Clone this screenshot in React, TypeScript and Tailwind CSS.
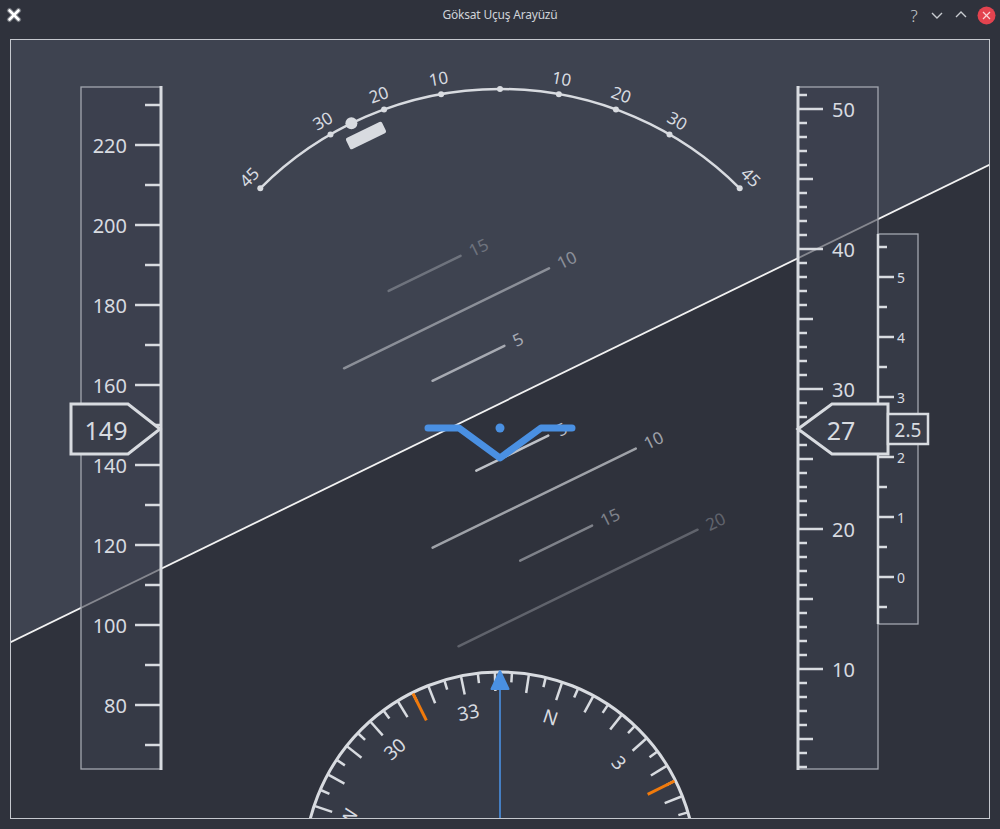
import React from "react";

const FG = "#d8dbe0";
const BLUE = "#4a90e2";
const CX = 500;
const CY = 428;
const FONT = "'Noto Sans', 'Open Sans', sans-serif";

function polar(cx: number, cy: number, r: number, deg: number): [number, number] {
  const a = (deg * Math.PI) / 180;
  return [cx + r * Math.sin(a), cy - r * Math.cos(a)];
}

const HORIZON_Y = 406;
const ROLL = -26;

const pitchLines = [
  { p: 15, len: 80 },
  { p: 10, len: 228 },
  { p: 5, len: 80 },
  { p: -5, len: 80 },
  { p: -10, len: 226 },
  { p: -15, len: 80 },
  { p: -20, len: 266 },
];

function Attitude() {
  return (
    <g transform={`rotate(${ROLL} ${CX} ${CY})`}>
      <rect x={-1500} y={-2000} width={4000} height={2000 + HORIZON_Y} fill="#3e4350" />
      <rect x={-1500} y={HORIZON_Y} width={4000} height={3000} fill="#2f323c" />
      {pitchLines.map(({ p, len }) => {
        const y = HORIZON_Y - 10 * p;
        const op = Math.max(0.15, 0.95 - Math.abs(y - CY) * 0.0037);
        const x2 = CX + len / 2;
        return (
          <g key={p} opacity={op}>
            <line x1={CX - len / 2} y1={y} x2={x2} y2={y} stroke={FG} strokeWidth={2.5} strokeLinecap="round" />
            <text
              x={x2 + 10}
              y={y}
              fill={FG}
              fontSize={17}
              fontFamily={FONT}
              dominantBaseline="central"
            >
              {Math.abs(p)}
            </text>
          </g>
        );
      })}
      <line x1={-1500} y1={HORIZON_Y} x2={2500} y2={HORIZON_Y} stroke="#f2f2f2" strokeWidth={1.8} />
    </g>
  );
}

function RollArc() {
  const R = 339;
  const [sx, sy] = polar(CX, CY, R, -45);
  const [ex, ey] = polar(CX, CY, R, 45);
  const marks = [-45, -30, -20, -10, 0, 10, 20, 30, 45];
  const [px, py] = polar(CX, CY, R, -26);
  return (
    <g>
      <path d={`M ${sx} ${sy} A ${R} ${R} 0 0 1 ${ex} ${ey}`} fill="none" stroke={FG} strokeWidth={2.5} />
      {marks.map((m) => {
        const [x, y] = polar(CX, CY, R, m);
        const [lx, ly] = polar(CX, CY, R + 16, m);
        return (
          <g key={m}>
            <circle cx={x} cy={y} r={3} fill={FG} />
            {m !== 0 && (
              <text
                x={lx}
                y={ly}
                fill={FG}
                fontSize={17}
                fontFamily={FONT}
                textAnchor="middle"
                dominantBaseline="central"
                transform={`rotate(${m} ${lx} ${ly})`}
              >
                {Math.abs(m)}
              </text>
            )}
          </g>
        );
      })}
      <circle cx={px} cy={py} r={6} fill={FG} />
      <rect x={-20} y={-6.3} width={40} height={12.6} rx={2} fill={FG} transform="translate(366 135.5) rotate(-26)" />
    </g>
  );
}

function SpeedTape() {
  const ticks: number[] = [];
  for (let v = 70; v <= 230; v += 10) ticks.push(v);
  const yOf = (v: number) => 429 - (v - 149) * 4;
  return (
    <g>
      <rect x={81} y={87} width={80} height={682} fill="#3c404c" fillOpacity={0.6} stroke="#a3a7b0" strokeWidth={1.3} />
      <line x1={161} y1={86} x2={161} y2={770} stroke={FG} strokeWidth={3} />
      {ticks.map((v) => {
        const y = yOf(v);
        const major = v % 20 === 0;
        return (
          <g key={v}>
            <line x1={major ? 135 : 145} y1={y} x2={161} y2={y} stroke={FG} strokeWidth={2.5} />
            {major && (
              <text x={127} y={y} fill={FG} fontSize={20} fontFamily={FONT} textAnchor="end" dominantBaseline="central">
                {v}
              </text>
            )}
          </g>
        );
      })}
      <polygon points="71,404 128,404 160,429 128,454 71,454" fill="#3a3e4a" stroke={FG} strokeWidth={3} strokeLinejoin="miter" />
      <text x={106} y={430} fill={FG} fontSize={25} fontFamily={FONT} textAnchor="middle" dominantBaseline="central">
        149
      </text>
    </g>
  );
}

function AltTape() {
  const ticks: number[] = [];
  for (let a = 3; a <= 51; a++) ticks.push(a);
  const yOf = (a: number) => 249 + (40 - a) * 14;
  const vs: number[] = [];
  for (let v = -0.5; v <= 5.5; v += 0.5) vs.push(v);
  const vyOf = (v: number) => 577 - v * 60;
  return (
    <g>
      <rect x={798} y={87} width={80} height={682} fill="#3c404c" fillOpacity={0.6} stroke="#a3a7b0" strokeWidth={1.3} />
      <rect x={878} y={234} width={40} height={390} fill="#3c404c" fillOpacity={0.6} stroke="#a3a7b0" strokeWidth={1.3} />
      <line x1={798} y1={86} x2={798} y2={770} stroke={FG} strokeWidth={3} />
      <line x1={878} y1={234} x2={878} y2={624} stroke={FG} strokeWidth={2.5} />
      {ticks.map((a) => {
        const y = yOf(a);
        const long = a % 10 === 0;
        const mid = a % 5 === 0;
        return (
          <g key={a}>
            <line x1={798} y1={y} x2={long ? 823 : mid ? 813 : 807} y2={y} stroke={FG} strokeWidth={2.5} />
            {long && (
              <text x={832} y={y} fill={FG} fontSize={20} fontFamily={FONT} dominantBaseline="central">
                {a}
              </text>
            )}
          </g>
        );
      })}
      {vs.map((v) => {
        const y = vyOf(v);
        const major = Number.isInteger(v);
        return (
          <g key={v}>
            <line x1={878} y1={y} x2={major ? 894 : 887} y2={y} stroke={FG} strokeWidth={2.5} />
            {major && (
              <text x={897} y={y} fill={FG} fontSize={14} fontFamily={FONT} dominantBaseline="central">
                {v}
              </text>
            )}
          </g>
        );
      })}
      <polygon points="798,429 832,404 888,404 888,454 832,454" fill="#3a3e4a" stroke={FG} strokeWidth={3} />
      <text x={841} y={430} fill={FG} fontSize={25} fontFamily={FONT} textAnchor="middle" dominantBaseline="central">
        27
      </text>
      <rect x={888} y={414} width={40} height={30} fill="#3a3e4a" stroke={FG} strokeWidth={2.5} />
      <text x={908} y={429.5} fill={FG} fontSize={19} fontFamily={FONT} textAnchor="middle" dominantBaseline="central">
        2.5
      </text>
    </g>
  );
}

function Compass() {
  const HX = 500;
  const HY = 868;
  const R = 196;
  const heading = 341.5;
  const labels: Record<number, string> = { 0: "N", 90: "E", 180: "S", 270: "W" };
  const ticks: React.ReactNode[] = [];
  for (let h = 0; h < 360; h += 5) {
    let a = h - heading;
    while (a > 180) a -= 360;
    while (a < -180) a += 360;
    if (Math.abs(a) > 100) continue;
    const major = h % 10 === 0;
    const [x1, y1] = polar(HX, HY, R - 1, a);
    const [x2, y2] = polar(HX, HY, R - (major ? 19 : 10), a);
    ticks.push(<line key={`t${h}`} x1={x1} y1={y1} x2={x2} y2={y2} stroke={FG} strokeWidth={2.5} />);
    if (h % 30 === 0) {
      const [lx, ly] = polar(HX, HY, R - 37, a);
      ticks.push(
        <text
          key={`l${h}`}
          x={lx}
          y={ly}
          fill={FG}
          fontSize={19}
          fontFamily={FONT}
          textAnchor="middle"
          dominantBaseline="central"
          transform={`rotate(${a} ${lx} ${ly})`}
        >
          {labels[h] ?? String(h / 10)}
        </text>
      );
    }
  }
  const orange = [315, 45].map((h) => {
    let a = h - heading;
    while (a > 180) a -= 360;
    while (a < -180) a += 360;
    const [x1, y1] = polar(HX, HY, R - 1, a);
    const [x2, y2] = polar(HX, HY, R - 31, a);
    return <line key={`o${h}`} x1={x1} y1={y1} x2={x2} y2={y2} stroke="#f07a0c" strokeWidth={3} />;
  });
  return (
    <g>
      <circle cx={HX} cy={HY} r={R} fill="#363a46" stroke={FG} strokeWidth={3} />
      {ticks}
      {orange}
      <line x1={500} y1={688} x2={500} y2={830} stroke={BLUE} strokeWidth={1.6} />
      <polygon points="500,671 491.5,689 508.5,689" fill={BLUE} stroke={BLUE} strokeWidth={2} strokeLinejoin="round" />
    </g>
  );
}

function Aircraft() {
  return (
    <g>
      <polyline
        points="428,428 459,428 500,458 541,428 572,428"
        fill="none"
        stroke={BLUE}
        strokeWidth={7}
        strokeLinecap="round"
        strokeLinejoin="round"
      />
      <circle cx={500} cy={428} r={4.5} fill={BLUE} />
    </g>
  );
}

function TitleBar() {
  return (
    <div className="grid h-[30px] grid-cols-[1fr_auto_1fr] items-center text-[#d0d3d9]">
      <div className="flex items-center pl-[6px]">
        <svg width="16" height="16" viewBox="0 0 16 16">
          <g strokeLinecap="round">
            <line x1="3.5" y1="3.5" x2="12.5" y2="12.5" stroke="#6f727a" strokeWidth="5" />
            <line x1="12.5" y1="3.5" x2="3.5" y2="12.5" stroke="#6f727a" strokeWidth="5" />
            <line x1="3.5" y1="3.5" x2="12.5" y2="12.5" stroke="#ffffff" strokeWidth="2.6" />
            <line x1="12.5" y1="3.5" x2="3.5" y2="12.5" stroke="#ffffff" strokeWidth="2.6" />
          </g>
        </svg>
      </div>
      <div className="text-[12px] font-['Noto_Sans',sans-serif] tracking-[-0.2px]">Göksat Uçuş Arayüzü</div>
      <div className="flex items-center justify-end gap-[8px] pr-[4px]">
        <span className="w-[14px] text-center text-[17px] leading-none font-light font-['Noto_Sans',sans-serif] text-[#c8cbd0]">
          ?
        </span>
        <svg width="16" height="16" viewBox="0 0 16 16">
          <polyline points="3,6 8,11 13,6" fill="none" stroke="#c8cbd0" strokeWidth="1.4" />
        </svg>
        <svg width="16" height="16" viewBox="0 0 16 16">
          <polyline points="3,10 8,5 13,10" fill="none" stroke="#c8cbd0" strokeWidth="1.4" />
        </svg>
        <svg width="19" height="19" viewBox="0 0 19 19">
          <circle cx="9.5" cy="9.5" r="9" fill="#e3434f" />
          <line x1="6" y1="6" x2="13" y2="13" stroke="#fbd3d6" strokeWidth="1.3" />
          <line x1="13" y1="6" x2="6" y2="13" stroke="#fbd3d6" strokeWidth="1.3" />
        </svg>
      </div>
    </div>
  );
}

export default function App() {
  return (
    <div className="flex h-[829px] w-[1000px] flex-col bg-[#2f323c]">
      <TitleBar />
      <div className="px-[10px] pt-[9px] pb-[10px]">
        <div className="h-[780px] w-[980px] border border-[#c5c8ce]">
          <svg width={978} height={778} viewBox="11 40 978 778" className="block">
            <Attitude />
            <RollArc />
            <Compass />
            <SpeedTape />
            <AltTape />
            <Aircraft />
          </svg>
        </div>
      </div>
    </div>
  );
}
